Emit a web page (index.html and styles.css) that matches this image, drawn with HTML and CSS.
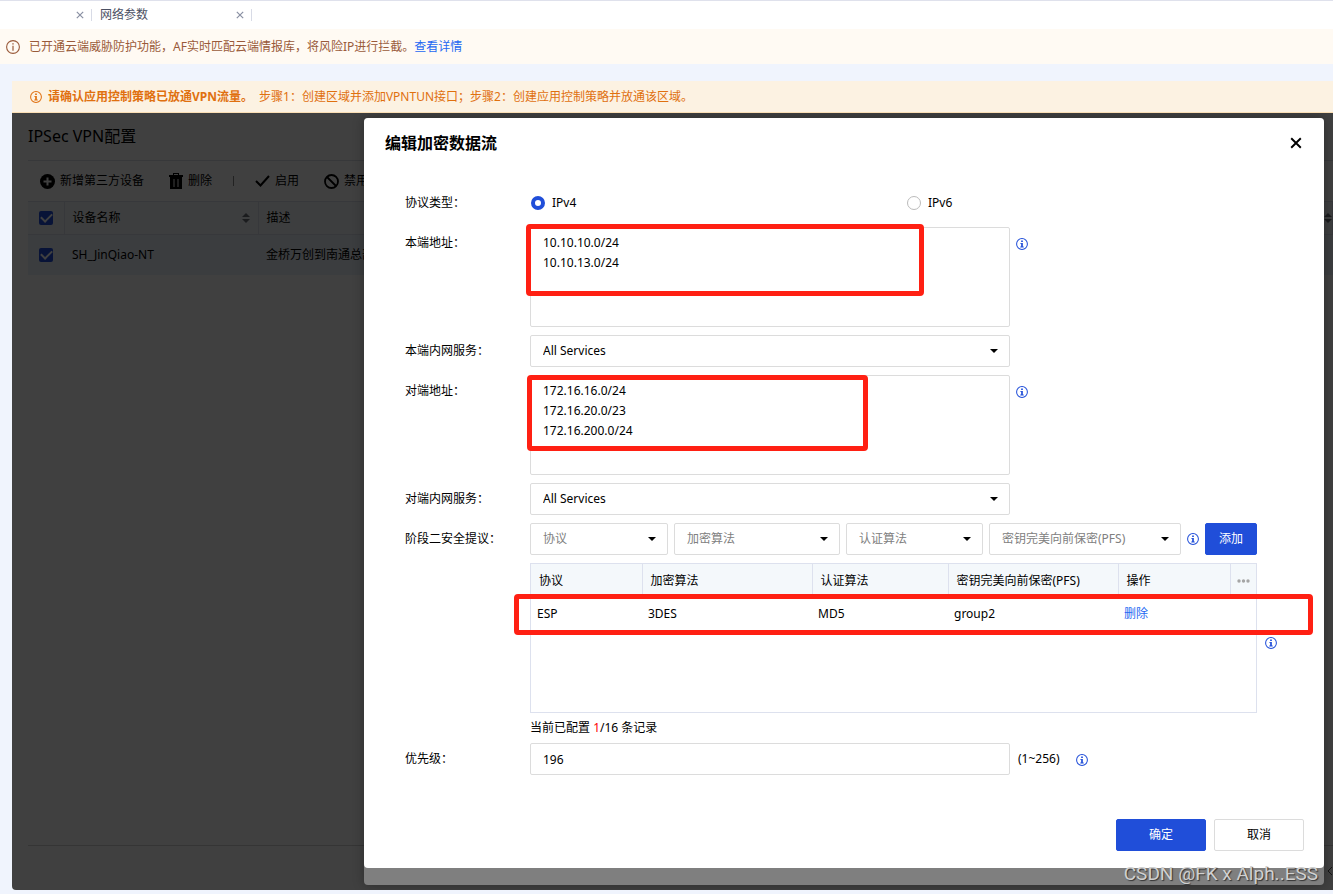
FILE: index.html
```html
<!DOCTYPE html>
<html lang="zh-CN">
  <head>
    <meta charset="utf-8" />
    <meta name="viewport" content="width=device-width, initial-scale=1" />
    <title>IPSec VPN配置</title>
    <link rel="stylesheet" href="styles.css">
  </head>
  <body>
    <svg class="sprite" aria-hidden="true">
      <symbol id="info" viewBox="0 0 14 14">
        <circle cx="7" cy="7" r="6.3" fill="none" stroke="currentColor" stroke-width="1.2"/>
        <path d="M6 2.900h2v1.800H6zM5 5.800h3v4.200h1v1H5v-1h1V6.800H5z" fill="currentColor"/>
      </symbol>
      <symbol id="info-thin" viewBox="0 0 14 14">
        <circle cx="7" cy="7" r="6.4" fill="none" stroke="currentColor" stroke-width="1.1"/>
        <path d="M6.300 3.200h1.400v1.400H6.300zM6.400 5.800h1.200v5H6.400z" fill="currentColor"/>
      </symbol>
      <symbol id="close" viewBox="0 0 10 10">
        <path d="M1 1l8 8M9 1L1 9" fill="none" stroke="currentColor"/>
      </symbol>
      <symbol id="sort" viewBox="0 0 8 10">
        <path d="M4 0l4 4H0zM4 10l4-4H0z" fill="currentColor"/>
      </symbol>
    </svg>

    <nav class="tabs">
      <div class="tab tab-first"><button class="icon-btn" aria-label="关闭"><svg width="8" height="8" stroke-width="1.5"><use href="#close"/></svg></button></div>
      <div class="tab"><span>网络参数</span><button class="icon-btn" aria-label="关闭"><svg width="8" height="8" stroke-width="1.5"><use href="#close"/></svg></button></div>
    </nav>

    <div class="notice">
      <svg width="14" height="14"><use href="#info-thin"/></svg>
      <span>已开通云端威胁防护功能，AF实时匹配云端情报库，将风险IP进行拦截。<a href="#">查看详情</a></span>
    </div>

    <div class="banner">
      <svg width="12" height="12"><use href="#info"/></svg>
      <strong>请确认应用控制策略已放通VPN流量。</strong>
      <span>步骤1：创建区域并添加VPNTUN接口；步骤2：创建应用控制策略并放通该区域。</span>
    </div>

    <main class="panel">
      <h1>IPSec VPN配置</h1>
      <div class="toolbar">
        <button>
          <svg width="15" height="15" viewBox="0 0 15 15"><circle cx="7.5" cy="7.5" r="7.5"/><path d="M7.5 3.5v8M3.5 7.5h8" stroke="#fff" stroke-width="2"/></svg>
          新增第三方设备
        </button>
        <button>
          <svg width="14" height="16" viewBox="0 0 14 16"><path fill-rule="evenodd" d="M4 0h6v2h4v2H0V2h4zM5 1v1h4V1zM1 4h12v12H1zM4.500 6v8h1V6zM8.500 6v8h1V6z"/></svg>
          删除
        </button>
        <span class="divider"></span>
        <button>
          <svg width="15" height="12" viewBox="0 0 15 12"><path d="M1 6l4.500 4.500L14 1" fill="none" stroke="#000" stroke-width="2"/></svg>
          启用
        </button>
        <button>
          <svg width="15" height="15" viewBox="0 0 15 15"><circle cx="7.500" cy="7.500" r="6.500" fill="none" stroke="#000" stroke-width="1.800"/><path d="M3 3l9 9" stroke="#000" stroke-width="1.800"/></svg>
          禁用
        </button>
      </div>
      <table class="devices">
        <thead>
          <tr>
            <th class="col-check"><input type="checkbox" aria-label="全选" checked></th>
            <th class="col-name"><div class="sortable">设备名称<svg width="8" height="10"><use href="#sort"/></svg></div></th>
            <th><div class="sortable">描述<svg width="8" height="10"><use href="#sort"/></svg></div></th>
          </tr>
        </thead>
        <tbody>
          <tr>
            <td class="col-check"><input type="checkbox" aria-label="SH_JinQiao-NT" checked></td>
            <td>SH_JinQiao-NT</td>
            <td>金桥万创到南通总部</td>
          </tr>
        </tbody>
      </table>
      <div class="pager">
        <button class="icon-btn" aria-label="上一页"><svg width="6" height="10" viewBox="0 0 6 10"><path d="M5 1L1 5l4 4" fill="none" stroke="#555"/></svg></button>
      </div>
      <div class="mask"></div>

      <div class="dialog-frame">
        <section class="dialog" role="dialog" aria-labelledby="dialogTitle">
          <header>
            <h2 id="dialogTitle">编辑加密数据流</h2>
            <button class="icon-btn close" aria-label="关闭"><svg width="12" height="12" stroke-width="1.6"><use href="#close"/></svg></button>
          </header>
          <form id="flowForm">
            <div class="row">
              <span class="label">协议类型：</span>
              <div class="radios">
                <label><input type="radio" name="family" checked>IPv4</label>
                <label><input type="radio" name="family">IPv6</label>
              </div>
            </div>
            <div class="row">
              <label class="label" for="localAddr">本端地址：</label>
              <div class="field">
                <textarea id="localAddr">10.10.10.0/24
10.10.13.0/24</textarea>
                <span class="mark mark-local"></span>
              </div>
              <svg class="tip" width="12" height="12"><use href="#info"/></svg>
            </div>
            <div class="row">
              <label class="label" for="localService">本端内网服务：</label>
              <div class="field select">
                <select id="localService"><option>All Services</option></select>
              </div>
            </div>
            <div class="row">
              <label class="label" for="peerAddr">对端地址：</label>
              <div class="field">
                <textarea id="peerAddr">172.16.16.0/24
172.16.20.0/23
172.16.200.0/24</textarea>
                <span class="mark mark-peer"></span>
              </div>
              <svg class="tip" width="12" height="12"><use href="#info"/></svg>
            </div>
            <div class="row">
              <label class="label" for="peerService">对端内网服务：</label>
              <div class="field select">
                <select id="peerService"><option>All Services</option></select>
              </div>
            </div>
            <div class="row">
              <label class="label" for="protocol">阶段二安全提议：</label>
              <div class="proposal">
                <div class="select hint"><select id="protocol"><option>协议</option></select></div>
                <div class="select hint"><select aria-label="加密算法"><option>加密算法</option></select></div>
                <div class="select hint"><select aria-label="认证算法"><option>认证算法</option></select></div>
                <div class="select hint"><select aria-label="密钥完美向前保密(PFS)"><option>密钥完美向前保密(PFS)</option></select></div>
                <svg width="12" height="12"><use href="#info"/></svg>
                <button type="button" class="btn primary">添加</button>
              </div>
            </div>
            <div class="row row-table">
              <span class="label"></span>
              <div class="proposal-list">
                <div class="table-box">
                  <table>
                    <colgroup>
                      <col class="c1"><col class="c2"><col class="c3"><col class="c4"><col class="c5"><col class="c6">
                    </colgroup>
                    <thead>
                      <tr><th>协议</th><th>加密算法</th><th>认证算法</th><th>密钥完美向前保密(PFS)</th><th>操作</th>
                        <th class="more"><svg width="13" height="4" viewBox="0 0 13 4"><circle cx="2" cy="2" r="1.700"/><circle cx="6.500" cy="2" r="1.700"/><circle cx="11" cy="2" r="1.700"/></svg></th></tr>
                    </thead>
                    <tbody>
                      <tr><td>ESP</td><td>3DES</td><td>MD5</td><td>group2</td><td><a href="#">删除</a></td><td></td></tr>
                    </tbody>
                  </table>
                  <span class="mark mark-row"></span>
                </div>
                <p>当前已配置 <em>1</em>/16 条记录</p>
              </div>
              <svg class="tip" width="12" height="12"><use href="#info"/></svg>
            </div>
            <div class="row">
              <label class="label" for="priority">优先级：</label>
              <div class="field"><input type="text" id="priority" value="196"></div>
              <span class="range">(1~256)</span>
              <svg class="tip" width="12" height="12"><use href="#info"/></svg>
            </div>
          </form>
          <footer>
            <button type="submit" form="flowForm" class="btn primary">确定</button>
            <button type="button" class="btn">取消</button>
          </footer>
        </section>
        <span class="watermark">CSDN @FK x Alph..ESS</span>
      </div>
    </main>
  </body>
</html>
```
FILE: styles.css
```css
* {
  box-sizing: border-box;
}
body {
  margin: 0;
  min-height: 100vh;
  display: flex;
  flex-direction: column;
  background-color: #f0f4fd;
  color: #000;
  font: 12px/20px "Noto Sans", "Noto Sans CJK SC", sans-serif;
  overflow-x: hidden;
}
button, input, select, textarea {
  font: inherit;
  color: inherit;
  margin: 0;
}
svg {
  display: block;
  flex-shrink: 0;
}
a {
  color: #2468f2;
  text-decoration: none;
}
.sprite {
  display: none;
}
.icon-btn {
  display: flex;
  padding: 0;
  border: 0;
  background: none;
  cursor: pointer;
}

/* top bars */
.tabs {
  display: flex;
  align-items: center;
  height: 29px;
  border-top: 1px solid #dfe1ec;
  background-color: #fff;
}
.tab {
  display: flex;
  align-items: center;
  justify-content: space-between;
  width: 160px;
  height: 12px;
  padding: 0 7px 0 8px;
  border-right: 1px solid #d8dbe6;
  color: #4b5063;
}
.tab-first {
  width: 92px;
  justify-content: flex-end;
}
.tab button {
  color: #8a90a3;
}
.notice {
  display: flex;
  align-items: center;
  gap: 9px;
  height: 35px;
  padding: 0 6px;
  background-color: #fffaf3;
  color: #9a5a3a;
}
.banner {
  display: flex;
  align-items: center;
  gap: 6px;
  height: 32px;
  margin: 17px 0 0 12px;
  padding: 0 18px;
  background-color: #fcf2e2;
  border-bottom: 1px solid #fbdfb5;
  color: #e0700f;
}
.banner strong {
  font-weight: 700;
}

/* device list behind the dialog */
.panel {
  position: relative;
  flex: 1;
  display: flex;
  flex-direction: column;
  margin: 0 0 4px 12px;
  padding-left: 16px;
  background-color: #fff;
  border-radius: 0 0 0 4px;
  overflow: hidden;
}
h1 {
  margin: 0;
  font-size: 16px;
  font-weight: 400;
  line-height: 47px;
  border-bottom: 1px solid #dcdfe6;
}
.toolbar {
  display: flex;
  align-items: center;
  gap: 25px;
  height: 40px;
  padding-left: 12px;
}
.toolbar button {
  display: flex;
  align-items: center;
  gap: 5px;
  padding: 0;
  border: 0;
  background: none;
  white-space: nowrap;
}
.divider {
  width: 1px;
  height: 10px;
  margin: 0 -4px;
  background-color: #888;
}
.devices {
  width: 100%;
  border-collapse: collapse;
  table-layout: fixed;
}
.devices th, .devices td {
  padding: 0 8px;
  text-align: left;
  font-weight: 400;
  white-space: nowrap;
}
.devices th {
  height: 33px;
  background-color: #f4f8fb;
  border: 1px solid #d9dfea;
  border-left: 0;
}
.devices th:last-child {
  padding-right: 0;
}
.devices td {
  height: 40px;
  background-color: #ecf2fb;
}
.devices .col-check {
  width: 36px;
  padding: 0 11px;
}
.col-name {
  width: 194px;
}
.sortable {
  display: flex;
  align-items: center;
  justify-content: space-between;
}
.sortable svg {
  color: #6b6f78;
}
input[type="checkbox"] {
  appearance: none;
  display: grid;
  place-items: center;
  width: 14px;
  height: 14px;
  border-radius: 2px;
  background-color: #204ed9;
}
input[type="checkbox"]::after {
  content: "";
  width: 9px;
  height: 5px;
  margin-bottom: 3px;
  border: solid #fff;
  border-width: 0 0 2px 2px;
  transform: rotate(-45deg);
}
.pager {
  display: flex;
  align-items: center;
  justify-content: flex-end;
  height: 45px;
  margin-top: auto;
  padding-top: 5px;
  border-top: 1px solid #d4d4d4;
}
.mask {
  position: absolute;
  inset: 0;
  background-color: rgba(0, 0, 0, .75);
}

/* dialog */
.dialog-frame {
  position: absolute;
  top: 5px;
  right: 9px;
  bottom: 5px;
  left: 352px;
  display: flex;
  flex-direction: column;
  padding-bottom: 17px;
  border-radius: 4px;
  background-color: #7f7f7f;
  box-shadow: 0 0 12px rgba(0, 0, 0, .3);
}
.dialog {
  flex: 1;
  display: flex;
  flex-direction: column;
  border-radius: 4px;
  background-color: #fff;
}
.dialog header {
  display: flex;
  align-items: center;
  justify-content: space-between;
  height: 50px;
  padding: 0 22px 0 21px;
}
h2 {
  margin: 0;
  font-size: 16px;
  font-weight: 700;
}
.dialog form {
  padding: 19px 41px 0;
}
.row {
  display: flex;
  margin-bottom: 8px;
}
.label {
  flex: 0 0 125px;
  line-height: 32px;
}
.field {
  position: relative;
  flex: 0 1 480px;
}
.radios {
  display: flex;
  flex: 1;
}
.radios label {
  display: flex;
  align-items: center;
  gap: 7px;
  width: 376px;
  height: 32px;
}
input[type="radio"] {
  appearance: none;
  width: 14px;
  height: 14px;
  margin-left: 1px;
  border: 1px solid #bbb;
  border-radius: 50%;
  background-color: #fff;
}
input[type="radio"]:checked {
  border: 4px solid #204ed9;
}
textarea, select, input[type="text"] {
  display: block;
  width: 100%;
  height: 32px;
  padding: 0 12px;
  border: 1px solid #dcdcdc;
  border-radius: 2px;
  background-color: #fff;
}
textarea {
  height: 100px;
  padding: 5px 12px;
  resize: none;
}
select {
  appearance: none;
}
.select {
  display: grid;
  align-items: center;
}
.select select, .select::after {
  grid-area: 1 / 1;
}
.select::after {
  content: "";
  z-index: 1;
  justify-self: end;
  margin-right: 12px;
  border: 4px solid transparent;
  border-top-color: #000;
  border-bottom: 0;
  pointer-events: none;
}
.hint select {
  color: #808080;
}
.tip {
  margin: 11px 0 0 6px;
}
.tip, .proposal svg {
  color: #204ed9;
}
.proposal {
  flex: 0 1 727px;
  display: grid;
  grid-template-columns: 138fr 166fr 137fr 192fr 12px 52px;
  align-items: center;
  gap: 6px;
}
.btn {
  height: 32px;
  padding: 0;
  border: 1px solid #dcdcdc;
  border-radius: 2px;
  background-color: #fff;
  cursor: pointer;
}
.btn.primary {
  border-color: #204ed9;
  background-color: #204ed9;
  color: #fff;
}
.row-table {
  margin-bottom: 0;
}
.row-table .tip {
  margin: 74px 0 0 8px;
}
.proposal-list {
  flex: 0 1 727px;
}
.proposal-list p {
  margin: 0;
  line-height: 30px;
}
.proposal-list em {
  color: #f00;
  font-style: normal;
}
.table-box {
  position: relative;
  height: 150px;
  border: 1px solid #dde1ee;
}
.table-box table {
  width: 100%;
  table-layout: fixed;
  border-collapse: collapse;
}
.table-box th, .table-box td {
  height: 33px;
  padding: 0 6px;
  text-align: left;
  font-weight: 400;
  white-space: nowrap;
}
.table-box th {
  padding: 0 8px;
  background-color: #f4f8fb;
  border-right: 1px solid #dde1ee;
}
.table-box th:last-child {
  border-right: 0;
}
.table-box .more {
  padding: 0 6px;
}
.more svg {
  fill: #a5a5a5;
}
.c1 { width: 111px; }
.c2 { width: 170px; }
.c3 { width: 136px; }
.c5 { width: 112px; }
.c6 { width: 26px; }
.range {
  margin: 0 10px 0 8px;
  line-height: 32px;
}

.dialog footer {
  display: flex;
  justify-content: flex-end;
  gap: 8px;
  margin-top: auto;
  padding: 0 20px 17px;
}
.dialog footer .btn {
  width: 90px;
}

/* red highlight boxes */
.mark {
  position: absolute;
  border: 5px solid #ff2013;
  border-radius: 4px;
  pointer-events: none;
}
.mark-local {
  top: -3px;
  left: -4px;
  width: 398px;
  height: 72px;
}
.mark-peer {
  top: 0;
  left: -3px;
  width: 341px;
  height: 76px;
}
.mark-row {
  top: 30px;
  left: -17px;
  right: -57px;
  height: 41px;
}
.watermark {
  position: absolute;
  right: 6px;
  bottom: 1px;
  color: #d0d0d0;
  font-family: Roboto, "Liberation Sans", sans-serif;
  font-size: 19px;
  text-shadow: 1px 1px 1px #333;
}
```
